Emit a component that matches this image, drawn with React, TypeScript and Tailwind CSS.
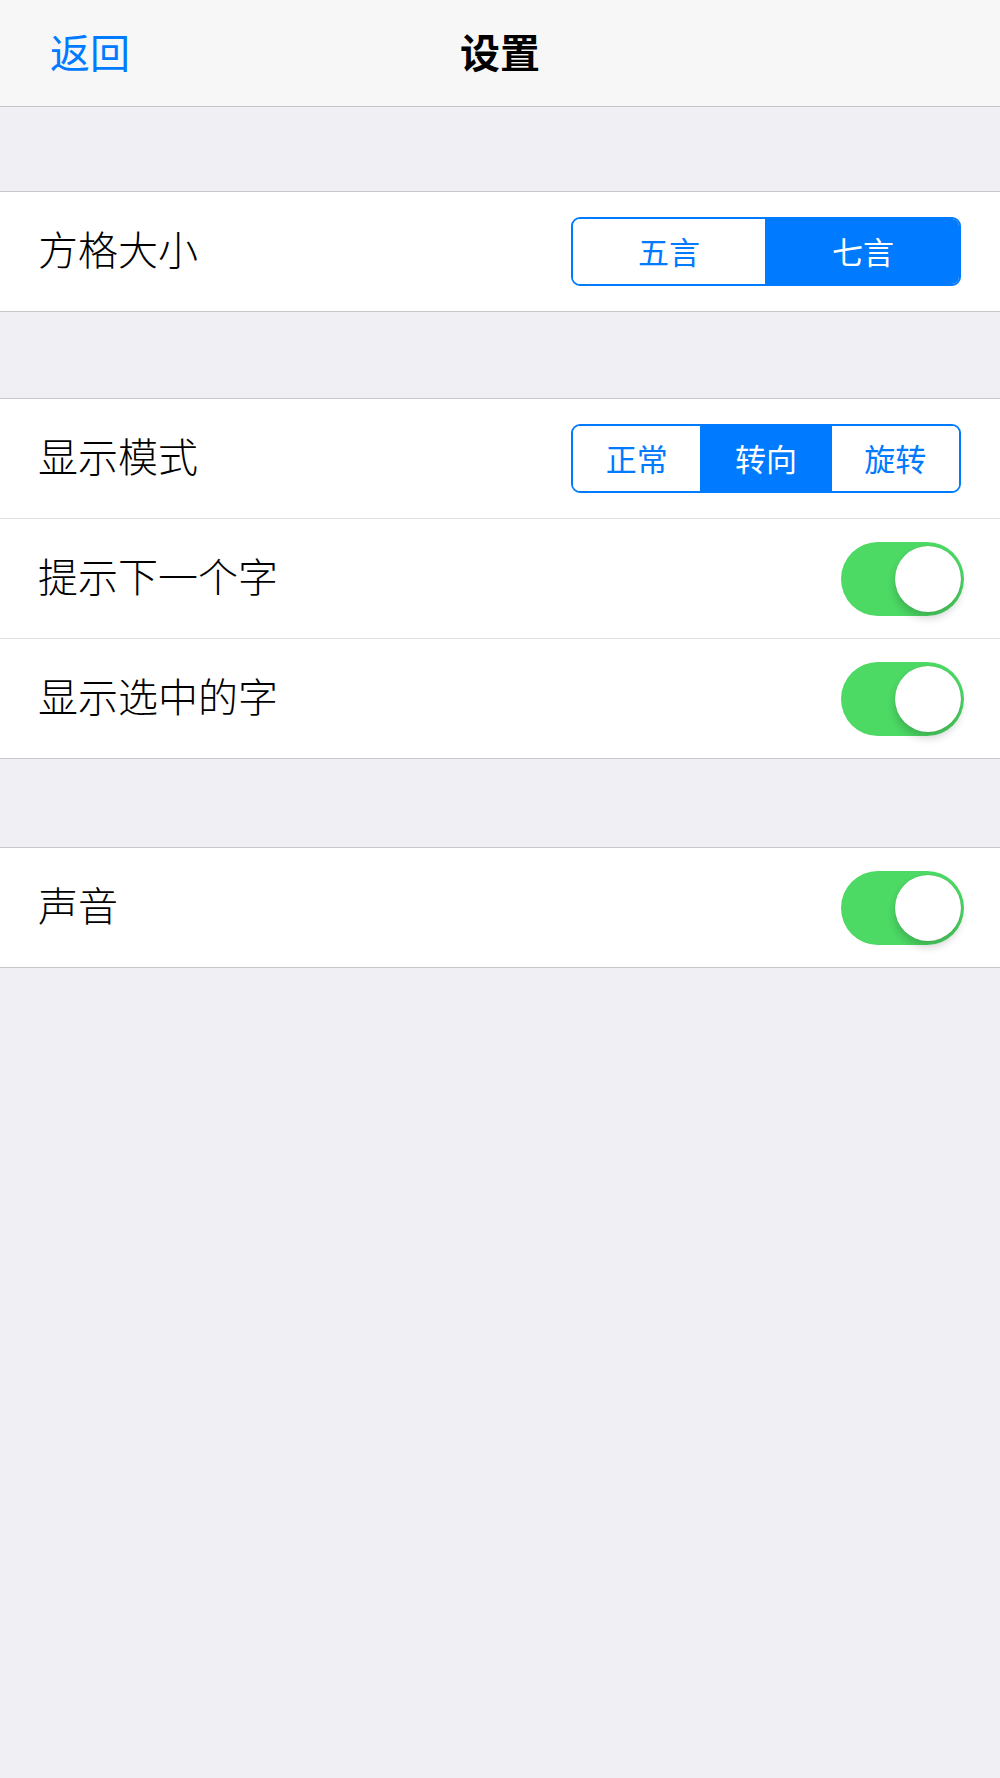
import React from "react";

const font = { fontFamily: '"Noto Sans CJK SC", "Noto Sans", sans-serif' };

function Segmented({ items, active }: { items: string[]; active: number }) {
  return (
    <div className="flex h-[69px] w-[390px] overflow-hidden rounded-[9px] border-2 border-[#007aff]">
      {items.map((t, i) => (
        <div
          key={t}
          className={
            "flex flex-1 items-center justify-center text-[31px] " +
            (i > 0 ? "border-l-2 border-[#007aff] " : "") +
            (i === active ? "bg-[#007aff] text-white" : "bg-white text-[#007aff]")
          }
        >
          {t}
        </div>
      ))}
    </div>
  );
}

function Toggle() {
  return (
    <div className="relative mr-[-3px] h-[74px] w-[123px] rounded-full bg-[#4cd964]">
      <div className="absolute right-[3px] top-[4px] h-[66px] w-[66px] rounded-full bg-white shadow-[0_6px_8px_rgba(0,0,0,0.18),0_0_1px_rgba(0,0,0,0.2)]" />
    </div>
  );
}

function Row({ label, children, last }: { label: string; children: React.ReactNode; last?: boolean }) {
  return (
    <div
      className={
        "flex h-[120px] items-center justify-between bg-white pl-[38px] pr-[39px] " +
        (last ? "border-b border-[#c8c7cc]" : "border-b border-[#e3e3e6]")
      }
    >
      <span className="mb-[8px] text-[40px] font-light text-black">{label}</span>
      {children}
    </div>
  );
}

export default function App() {
  return (
    <div className="min-h-[1778px] w-full bg-[#efeff4]" style={font}>
      <div className="flex h-[107px] items-center justify-between border-b border-[#c4c4c8] bg-[#f7f7f8] px-[50px] pb-[4px]">
        <span className="w-[90px] text-[40px] text-[#007aff]">返回</span>
        <span className="text-[40px] font-bold text-black">设置</span>
        <span className="w-[90px]" />
      </div>

      <div className="mt-[84px] border-t border-[#c8c7cc]">
        <Row label="方格大小" last>
          <Segmented items={["五言", "七言"]} active={1} />
        </Row>
      </div>

      <div className="mt-[86px] border-t border-[#c8c7cc]">
        <Row label="显示模式">
          <Segmented items={["正常", "转向", "旋转"]} active={1} />
        </Row>
        <Row label="提示下一个字">
          <Toggle />
        </Row>
        <Row label="显示选中的字" last>
          <Toggle />
        </Row>
      </div>

      <div className="mt-[88px] border-t border-[#c8c7cc]">
        <Row label="声音" last>
          <Toggle />
        </Row>
      </div>
    </div>
  );
}
